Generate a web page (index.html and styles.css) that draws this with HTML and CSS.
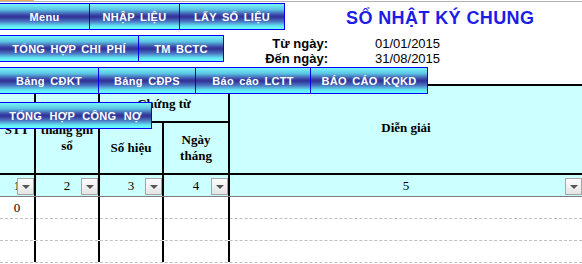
FILE: index.html
```html
<!DOCTYPE html>
<html lang="vi">
	<head>
		<meta charset="UTF-8" />
		<meta name="viewport" content="width=device-width, initial-scale=1.0" />
		<title>Sổ nhật ký chung</title>
		<link rel="stylesheet" href="styles.css">
	</head>
	<body>
		<div class="sheet">
			<div class="topline"></div>

			<div class="toolbar">
				<div class="btn-row">
					<div class="btn-group">
						<button class="btn w-91">Menu</button>
						<button class="btn w-91">NHẬP LIỆU</button>
						<button class="btn w-106">LẤY SỐ LIỆU</button>
					</div>
					<h1 class="title">SỔ NHẬT KÝ CHUNG</h1>
				</div>

				<div class="btn-row">
					<div class="btn-group">
						<button class="btn w-140">TỔNG HỢP CHI PHÍ</button>
						<button class="btn w-86">TM BCTC</button>
					</div>
					<dl class="period">
						<dt>Từ ngày:</dt>
						<dd>01/01/2015</dd>
						<dt>Đến ngày:</dt>
						<dd>31/08/2015</dd>
					</dl>
				</div>

				<div class="btn-row row-over">
					<div class="btn-group">
						<button class="btn w-100">Bảng CĐKT</button>
						<button class="btn w-98">Bảng CĐPS</button>
						<button class="btn w-116">Báo cáo LCTT</button>
						<button class="btn w-118">BÁO CÁO KQKD</button>
					</div>
				</div>
			</div>

			<button class="btn btn-float">TỔNG HỢP CÔNG NỢ</button>

			<div class="ledger">
				<div class="ledger-head">
					<div class="hcell c-stt">STT</div>
					<div class="hcell c-date">Ngày tháng ghi sổ</div>
					<div class="hcell c-voucher">Chứng từ</div>
					<div class="hcell c-no">Số hiệu</div>
					<div class="hcell c-vdate">Ngày tháng</div>
					<div class="hcell c-desc">Diễn giải</div>
				</div>

				<div class="ledger-row filter-row">
					<div class="cell">1<span class="dropdown"></span></div>
					<div class="cell">2<span class="dropdown"></span></div>
					<div class="cell">3<span class="dropdown"></span></div>
					<div class="cell">4<span class="dropdown"></span></div>
					<div class="cell">5<span class="dropdown"></span></div>
				</div>

				<div class="ledger-row data-row">
					<div class="cell">0</div>
					<div class="cell"></div>
					<div class="cell"></div>
					<div class="cell"></div>
					<div class="cell"></div>
				</div>
				<div class="ledger-row data-row">
					<div class="cell"></div>
					<div class="cell"></div>
					<div class="cell"></div>
					<div class="cell"></div>
					<div class="cell"></div>
				</div>
				<div class="ledger-row data-row">
					<div class="cell"></div>
					<div class="cell"></div>
					<div class="cell"></div>
					<div class="cell"></div>
					<div class="cell"></div>
				</div>
			</div>
		</div>
	</body>
</html>
```

FILE: styles.css
```css
* {
	padding: 0;
	margin: 0;
	box-sizing: border-box;
}

html,
body {
	width: 582px;
	height: 264px;
	overflow: hidden;
	background-color: #fff;
	font-family: 'Liberation Sans', Arial, sans-serif;
}

.sheet {
	position: relative;
	width: 582px;
	height: 264px;
}

.topline {
	height: 2px;
	border-bottom: 1px solid #b4b4b4;
	background: linear-gradient(to right, #e8a860 0, #e8a860 34px, #fff 34px);
	margin-bottom: 1px;
}

/* toolbar */
.btn-row {
	display: flex;
	align-items: flex-start;
	height: 27px;
	margin-bottom: 5px;
}

.btn-group {
	display: flex;
	margin-left: -1px;
}

.btn {
	height: 27px;
	border: 1px solid #0000f0;
	background: linear-gradient(#78f6f6 0%, #5cc4e4 22%, #3a46a6 44%, #303096 52%, #4a78c4 70%, #62e8f4 88%, #6cffff 100%);
	color: #fff;
	font-family: 'Liberation Sans', Arial, sans-serif;
	font-size: 11px;
	font-weight: bold;
	letter-spacing: 0.3px;
	word-spacing: 2px;
	white-space: nowrap;
	cursor: pointer;
}

.btn + .btn {
	margin-left: -1px;
}

.w-86 { width: 86px; }
.w-91 { width: 91px; }
.w-98 { width: 98px; }
.w-100 { width: 100px; }
.w-106 { width: 106px; }
.w-116 { width: 116px; }
.w-118 { width: 118px; }
.w-140 { width: 140px; }

.title {
	margin: 4px 0 0 61px;
	color: #1c1ce6;
	font-size: 18px;
	line-height: 22px;
	font-weight: bold;
	letter-spacing: 0.4px;
}

.period {
	display: grid;
	grid-template-columns: 104px auto;
	column-gap: 47px;
	margin-top: 1px;
	font-size: 13px;
	line-height: 15px;
	color: #000;
}

.period dt {
	text-align: right;
	font-weight: bold;
}

.row-over {
	position: relative;
	z-index: 2;
	margin-bottom: 0;
}

.btn-float {
	position: absolute;
	top: 102px;
	left: -1px;
	z-index: 3;
	width: 153px;
	word-spacing: 4px;
}

/* ledger */
.ledger {
	margin-top: -10px;
	font-family: 'Liberation Serif', 'Times New Roman', serif;
	font-size: 13px;
	color: #000;
}

.ledger-head,
.ledger-row {
	display: grid;
	grid-template-columns: 34px 64px 64px 66px 1fr;
}

.ledger-head {
	grid-template-rows: 37px 50px;
	border-top: 2px solid #000;
	border-bottom: 2px solid #000;
	background-color: #ccffff;
	font-weight: bold;
	line-height: 16px;
}

.hcell {
	display: flex;
	align-items: center;
	justify-content: center;
	padding: 0 3px;
	text-align: center;
}

.hcell + .hcell,
.cell + .cell {
	border-left: 2px solid #000;
}

.c-stt { grid-column: 1; grid-row: 1 / 3; }
.c-date { grid-column: 2; grid-row: 1 / 3; }
.c-voucher { grid-column: 3 / 5; grid-row: 1; border-bottom: 2px solid #000; }
.c-no { grid-column: 3; grid-row: 2; }
.c-vdate { grid-column: 4; grid-row: 2; }
.c-desc { grid-column: 5; grid-row: 1 / 3; padding-bottom: 3px; }

.cell {
	position: relative;
	text-align: center;
}

.filter-row {
	height: 22px;
	background-color: #ccffff;
	border-bottom: 1px solid #7c7c7c;
	line-height: 21px;
}

.dropdown {
	position: absolute;
	top: 3px;
	right: 0;
	width: 17px;
	height: 17px;
	border: 1px solid #a6a6a6;
	background: linear-gradient(#fdfdfd, #e4e4e4);
}

.dropdown::after {
	content: '';
	position: absolute;
	left: 4px;
	top: 6px;
	border-left: 4px solid transparent;
	border-right: 4px solid transparent;
	border-top: 4px solid #555;
}

.data-row {
	height: 22px;
	border-bottom: 1px dashed #c0c0c0;
	line-height: 22px;
}
```
